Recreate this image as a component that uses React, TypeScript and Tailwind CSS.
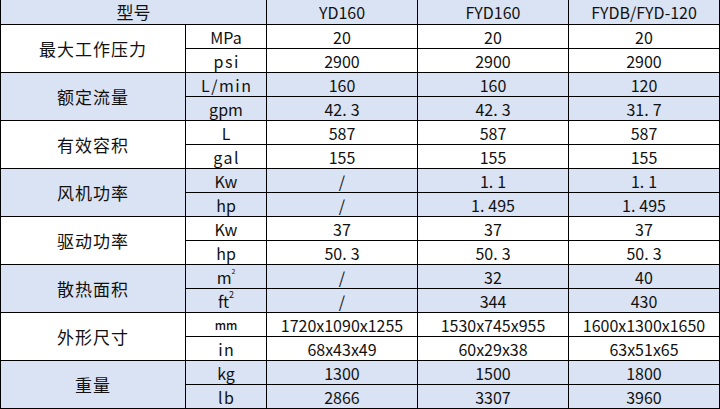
import React from 'react';

type Group = {
  label: string;
  blue: boolean;
  rows: { unit: React.ReactNode; values: string[] }[];
};

// narrow letters in the sheet's font sit in wide cells, so they look spaced
const spaced = (u: string) => <span className="tracking-[1.5px] pl-[1.5px]">{u}</span>;

const groups: Group[] = [
  {
    label: '最大工作压力',
    blue: false,
    rows: [
      { unit: 'MPa', values: ['20', '20', '20'] },
      { unit: spaced('psi'), values: ['2900', '2900', '2900'] },
    ],
  },
  {
    label: '额定流量',
    blue: true,
    rows: [
      { unit: spaced('L/min'), values: ['160', '160', '120'] },
      { unit: 'gpm', values: ['42.3', '42.3', '31.7'] },
    ],
  },
  {
    label: '有效容积',
    blue: false,
    rows: [
      { unit: 'L', values: ['587', '587', '587'] },
      { unit: spaced('gal'), values: ['155', '155', '155'] },
    ],
  },
  {
    label: '风机功率',
    blue: true,
    rows: [
      { unit: 'Kw', values: ['/', '1.1', '1.1'] },
      { unit: 'hp', values: ['/', '1.495', '1.495'] },
    ],
  },
  {
    label: '驱动功率',
    blue: false,
    rows: [
      { unit: 'Kw', values: ['37', '37', '37'] },
      { unit: 'hp', values: ['50.3', '50.3', '50.3'] },
    ],
  },
  {
    label: '散热面积',
    blue: true,
    rows: [
      {
        unit: (
          <span>
            m<sup className="text-[7px] align-[6px]">2</sup>
          </span>
        ),
        values: ['/', '32', '40'],
      },
      {
        unit: (
          <span>
            ft<sup className="text-[9px] align-[5px]">2</sup>
          </span>
        ),
        values: ['/', '344', '430'],
      },
    ],
  },
  {
    label: '外形尺寸',
    blue: false,
    rows: [
      { unit: <span className="text-[12px] font-medium">mm</span>, values: ['1720x1090x1255', '1530x745x955', '1600x1300x1650'] },
      { unit: spaced('in'), values: ['68x43x49', '60x29x38', '63x51x65'] },
    ],
  },
  {
    label: '重量',
    blue: true,
    rows: [
      { unit: 'kg', values: ['1300', '1500', '1800'] },
      { unit: spaced('lb'), values: ['2866', '3307', '3960'] },
    ],
  },
];

const cell = 'flex items-center justify-center border-r border-b border-black';

// the source sheet shows the decimal point as a wide half-width glyph
function Value({ v }: { v: string }) {
  const parts = v.split('.');
  if (parts.length === 1) return <>{v}</>;
  return (
    <>
      {parts[0]}
      <span className="mr-[4px]">.</span>
      {parts[1]}
    </>
  );
}

export default function App() {
  return (
    <div
      className="w-[720px] h-[409px] bg-white overflow-hidden text-[#111]"
      style={{ fontFamily: '"Noto Sans CJK SC", "Noto Sans", sans-serif' }}
    >
      <div className="grid grid-cols-[185px_81px_151px_151px_151px] grid-rows-[25px_repeat(16,24px)] border-l border-black w-[720px]">
        <div className={`${cell} col-span-2 bg-[#dae3f3] text-[17px]`}>型号</div>
        <div className={`${cell} bg-[#dae3f3] text-[16px]`}>YD160</div>
        <div className={`${cell} bg-[#dae3f3] text-[16px]`}>FYD160</div>
        <div className={`${cell} bg-[#dae3f3] text-[16px]`}>FYDB/FYD-120</div>

        {groups.map((g) => {
          const bg = g.blue ? 'bg-[#dae3f3]' : 'bg-white';
          return (
            <React.Fragment key={g.label}>
              <div className={`${cell} ${bg} row-span-2 text-[17px] tracking-[1px]`}>{g.label}</div>
              {g.rows.map((r, i) => (
                <React.Fragment key={i}>
                  <div className={`${cell} ${bg} text-[16px]`}>{r.unit}</div>
                  {r.values.map((v, j) => (
                    <div key={j} className={`${cell} ${bg} text-[16px]`}>
                      <Value v={v} />
                    </div>
                  ))}
                </React.Fragment>
              ))}
            </React.Fragment>
          );
        })}
      </div>
    </div>
  );
}
